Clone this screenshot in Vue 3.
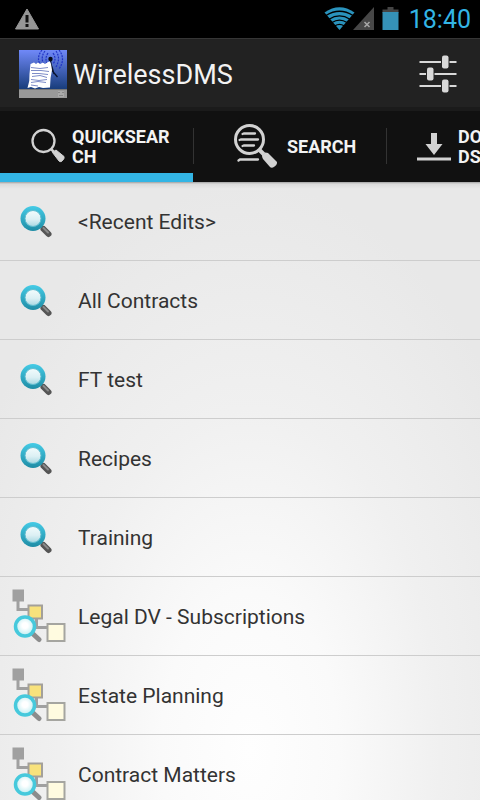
<script setup>
import { ref } from 'vue'

const active = ref('quick')
const tabs = [
  { id: 'quick', label: 'QUICKSEARCH' },
  { id: 'search', label: 'SEARCH' },
  { id: 'downloads', label: 'DOWNLOADS' },
]
const items = [
  { label: '<Recent Edits>', kind: 'search' },
  { label: 'All Contracts', kind: 'search' },
  { label: 'FT test', kind: 'search' },
  { label: 'Recipes', kind: 'search' },
  { label: 'Training', kind: 'search' },
  { label: 'Legal DV - Subscriptions', kind: 'tree' },
  { label: 'Estate Planning', kind: 'tree' },
  { label: 'Contract Matters', kind: 'tree' },
]
</script>

<template>
  <div class="screen">
    <svg class="defs" aria-hidden="true">
      <defs>
        <linearGradient id="ring" x1="0" y1="0" x2="0" y2="1">
          <stop offset="0" stop-color="#45cbe6" />
          <stop offset="1" stop-color="#1e8ca5" />
        </linearGradient>
        <linearGradient id="lens" x1="0" y1="0" x2="0" y2="1">
          <stop offset="0" stop-color="#f2fbfc" />
          <stop offset="0.55" stop-color="#dcf0f4" />
          <stop offset="1" stop-color="#a9d8e2" />
        </linearGradient>
        <linearGradient id="sky" x1="0" y1="0" x2="0" y2="1">
          <stop offset="0" stop-color="#7089f8" />
          <stop offset="1" stop-color="#163b78" />
        </linearGradient>
        <radialGradient id="glow" cx="0.5" cy="0.45" r="0.5">
          <stop offset="0.3" stop-color="#ffffff" />
          <stop offset="1" stop-color="#c2eef2" />
        </radialGradient>
      </defs>
    </svg>

    <div class="status">
      <svg width="24" height="22" viewBox="0 0 24 22" aria-hidden="true">
        <path d="M12 1 L23.500 21 H0.500 Z" fill="#969696" stroke="#969696" stroke-linejoin="round" />
        <path d="M10.500 7h3v7.500h-3z M10.500 16h3v3h-3z" fill="#111" />
      </svg>
      <div class="status-right">
        <svg width="75" height="24" viewBox="0 0 75 24" aria-hidden="true">
          <path d="M15.500 23 L0.500 5.500 Q15.500 -5 30.500 5.500 Z" fill="#2a93bd" />
          <g fill="none" stroke="#000" stroke-width="1.300">
            <path d="M2 8.500 Q15.500 0 29 8.500" />
            <path d="M5 12.200 Q15.500 5.500 26 12.200" />
            <path d="M8 15.500 Q15.500 10.700 23 15.500" />
            <path d="M11 18.800 Q15.500 15.800 20 18.800" />
          </g>
          <path d="M29 23 L50 0 V23 Z" fill="#474747" />
          <path d="M40.500 15 l5 5 m0 -5 l-5 5" stroke="#a8a8a8" stroke-width="1.500" />
          <path d="M58.500 2.500 H63.500 V0 H69.500 V2.500 H74.500 V6 H58.500 Z" fill="#454545" />
          <path d="M58.500 5 H74.500 V23 H58.500 Z" fill="#3592b8" />
        </svg>
        <span class="clock">18:40</span>
      </div>
    </div>

    <header class="bar">
      <svg class="logo" width="48" height="48" viewBox="0 0 48 48" aria-hidden="true">
        <rect width="48" height="40" fill="url(#sky)" />
        <rect y="39" width="48" height="9" fill="#999" />
        <path d="M0 39.500 H48" stroke="#777" />
        <rect x="39" y="41" width="6" height="6" fill="#aaa" />
        <path d="M39 42h2v1h-2z M43 42h2v1h-2z M40 45h4v1h-4z" fill="#888" />
        <g fill="none" stroke="#2034c4" stroke-width="1.200" stroke-dasharray="2 1">
          <path d="M29 3 Q25 9 29 15" />
          <path d="M26 1 Q20 9 27 17" />
          <path d="M23 0 Q16 9 23 17" />
          <path d="M34 3 Q38 9 34 14" />
          <path d="M37 1 Q42 8 37 17" />
          <path d="M40 0 Q47 9 40 19" />
        </g>
        <path d="M31.500 9 L32.500 20 L38.500 27 M33 17 L35 24 M32 14 L34 21" fill="none" stroke="#08122c" stroke-width="1.300" />
        <path d="M11.500 14 L15 12.500 17 14 19 12.500 21 14 24 12.500 26 14 29 12 31 11.500 32 14 L33 20 Q31 28 31 37.500 L24 38 20 37 16 38.500 12 37 8.500 38 Q11 31 10.500 24 Z" fill="#fff" />
        <path d="M12 17.500 l9 1 8 -1 M12 20.500 l10 0 8 1 M13 23.500 l7 0 9 1 M13 26.500 l8 -1 7 2 M12 29.500 l8 1 8 -1 M12 32.500 l7 -1 8 1 M12 35 l7 1" fill="none" stroke="#7d8cc8" />
        <circle cx="31.500" cy="9" r="2.200" fill="#050a18" />
      </svg>
      <h1>WirelessDMS</h1>
      <button class="settings" type="button" aria-label="Settings">
        <svg width="38" height="38" viewBox="0 0 38 38" aria-hidden="true">
          <path d="M0.500 7H22 M30.500 7H37.500 M0.500 19H7 M15.500 19H37.500 M0.500 31H22 M30.500 31H37.500" stroke="#d8d8d8" stroke-width="2" />
          <g fill="#d8d8d8">
            <rect x="23" y="0.500" width="6.500" height="13" rx="2" />
            <rect x="8" y="12.500" width="6.500" height="13" rx="2" />
            <rect x="23" y="24.500" width="6.500" height="13" rx="2" />
          </g>
        </svg>
      </button>
    </header>

    <nav class="tabs">
      <button
        v-for="tab in tabs"
        :key="tab.id"
        type="button"
        class="tab"
        :class="[tab.id, { active: active === tab.id }]"
        @click="active = tab.id"
      >
        <svg v-if="tab.id === 'quick'" width="48" height="48" viewBox="0 0 48 48" aria-hidden="true">
          <circle cx="19.500" cy="18" r="11" fill="none" stroke="#d2d2d2" stroke-width="2.300" />
          <path d="M27 26 l3 3" stroke="#d2d2d2" stroke-width="2.500" />
          <path d="M28.500 29.500 L32 27 L40 33.500 Q41 35.500 37.500 38.500 Q36 39 35 38 Z" fill="#d2d2d2" stroke="#d2d2d2" stroke-linejoin="round" />
        </svg>
        <svg v-else-if="tab.id === 'search'" width="48" height="48" viewBox="0 0 48 48" aria-hidden="true">
          <circle cx="17.500" cy="16.500" r="14" fill="none" stroke="#d2d2d2" stroke-width="3" />
          <g fill="none" stroke="#d2d2d2" stroke-width="2.300" stroke-linecap="round">
            <path d="M10.500 11 L12 10.500H23 M7.500 17 L9 16.500H26 M10.500 23 L12 22.500H22 M6.500 37.500 L8 36.500H26" />
          </g>
          <path d="M27 26.500 l5 5" stroke="#d2d2d2" stroke-width="4" />
          <path d="M30 32.500 L33.500 29.500 Q35 29.500 36 30 L45 39 Q45.500 42 41 44.500 Q39 45 38 44 L31 36 Q30 34 30 32.500 Z" fill="#d2d2d2" />
        </svg>
        <svg v-else width="48" height="48" viewBox="0 0 48 48" aria-hidden="true">
          <path d="M21 10 H27 V21 H32.500 L24 32 L15.500 21 H21 Z" fill="#d2d2d2" />
          <path d="M7 36 H41" stroke="#d2d2d2" stroke-width="3" />
        </svg>
        <span>{{ tab.label }}</span>
      </button>
    </nav>

    <main class="content">
      <ul class="list">
        <li v-for="item in items" :key="item.label">
          <button class="row" type="button">
            <svg v-if="item.kind === 'search'" width="54" height="54" viewBox="0 0 54 54" aria-hidden="true">
              <path d="M29 32 L37 40" stroke="#888" stroke-width="3" />
              <path d="M31.500 35 L36.500 40" stroke="#555" stroke-width="6" stroke-linecap="round" />
              <path d="M31.500 34 L36 38.500" stroke="#8a8a8a" stroke-width="2" stroke-linecap="round" />
              <circle cx="21" cy="24.500" r="12.500" fill="url(#ring)" />
              <circle cx="21" cy="24.500" r="8" fill="url(#lens)" stroke="#5fbccf" />
            </svg>
            <svg v-else width="54" height="54" viewBox="0 0 54 54" aria-hidden="true">
              <path d="M6 9 V20.500 H18 M24.500 28 V38.500 H36" fill="none" stroke="#a0a0a0" stroke-width="3" />
              <rect x="0.500" y="0.500" width="11.500" height="12" fill="#a0a0a0" />
              <rect x="16.500" y="16.500" width="13.500" height="13" fill="#f8e27c" stroke="#a3a09a" stroke-width="2" />
              <rect x="35.500" y="35" width="17" height="17" fill="#fffbe0" stroke="#a5a5a0" stroke-width="2" />
              <path d="M20 44 L27 50.500" stroke="#8c8c8c" stroke-width="5" stroke-linecap="round" />
              <circle cx="13" cy="37.500" r="9.500" fill="url(#glow)" stroke="#46c9dc" stroke-width="3.500" />
            </svg>
            <span>{{ item.label }}</span>
          </button>
        </li>
      </ul>
    </main>
  </div>
</template>

<style>
body {
  background: #000;
}
</style>

<style scoped>
.screen {
  display: flex;
  flex-direction: column;
  height: 100vh;
  overflow: hidden;
  font-family: Roboto, "Liberation Sans", sans-serif;
}
.defs {
  position: absolute;
  width: 0;
  height: 0;
}
button {
  border: 0;
  margin: 0;
  background: none;
  font-family: inherit;
  cursor: pointer;
}
svg {
  display: block;
  flex: none;
}
.status {
  flex: none;
  display: flex;
  align-items: center;
  justify-content: space-between;
  height: 38px;
  padding: 0 9px 0 15px;
  box-sizing: border-box;
  background: #000;
}
.status-right {
  display: flex;
  align-items: center;
  gap: 10px;
}
.clock {
  padding-top: 2px;
  color: #33b5e5;
  font-size: 25px;
  line-height: 36px;
}
.bar {
  flex: none;
  display: flex;
  align-items: center;
  gap: 6px;
  height: 73px;
  padding: 0 19px;
  box-sizing: border-box;
  border-top: 1px solid #363636;
  border-bottom: 4px solid #1b1b1b;
  background: #222;
}
.logo {
  margin-top: 2px;
}
h1 {
  flex: 1;
  margin: 4px 0 0;
  color: #f3f3f3;
  font-size: 27px;
  font-weight: 400;
  line-height: 32px;
}
.settings {
  padding: 1px 4px 0;
}
.tabs {
  flex: none;
  display: flex;
  height: 71px;
  background: #111;
  overflow: hidden;
}
.tab {
  flex: none;
  display: flex;
  align-items: center;
  width: 193px;
  padding: 9px 20px 0 24px;
  box-sizing: border-box;
  border-bottom: 9px solid transparent;
  color: #f3f3f3;
  font-size: 18px;
  font-weight: 700;
  line-height: 20px;
  text-align: left;
}
.tab + .tab {
  background: linear-gradient(#333, #333) left 0 top 17px / 1px 36px no-repeat;
}
.tab span {
  word-break: break-all;
}
.tab.active {
  border-bottom-color: #33b5e5;
}
.tab.search {
  gap: 7px;
  padding-left: 39px;
}
.tab.downloads {
  padding-right: 28px;
}
.content {
  flex: 1;
  min-height: 0;
  overflow: hidden;
  background:
    linear-gradient(rgba(0, 0, 0, 0.3), rgba(0, 0, 0, 0.06) 2px, transparent 7px),
    radial-gradient(ellipse 66% 92% at 52% 92%, #fefefe 0%, #fafafa 28%, #f0f0f0 60%, #e8e8e8 100%);
}
.list {
  margin: 0;
  padding: 0;
  list-style: none;
}
.row {
  display: flex;
  align-items: center;
  gap: 12px;
  width: 100%;
  height: 79px;
  padding: 0 12px;
  border-bottom: 1px solid #cdcdcd;
  color: #333;
  font-size: 21px;
  line-height: 28px;
  text-align: left;
}
.row span {
  padding-top: 2px;
}
</style>
